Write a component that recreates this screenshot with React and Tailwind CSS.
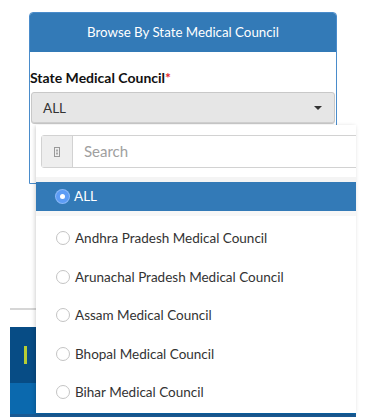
import { useState } from 'react';

const COUNCILS = [
  'ALL',
  'Andhra Pradesh Medical Council',
  'Arunachal Pradesh Medical Council',
  'Assam Medical Council',
  'Bhopal Medical Council',
  'Bihar Medical Council',
];

function Radio({ checked }) {
  if (checked) {
    return (
      <span className="flex h-[13px] w-[13px] shrink-0 items-center justify-center rounded-full bg-[#5c9cf5] shadow-[0_0_0_1px_#8ab8f8]">
        <span className="h-[5px] w-[5px] rounded-full bg-white" />
      </span>
    );
  }
  return <span className="h-[14px] w-[14px] shrink-0 rounded-full border border-[#c4c4c4] bg-white" />;
}

export default function App() {
  const [selected, setSelected] = useState('ALL');

  return (
    <div className="relative h-[419px] w-[371px] overflow-hidden bg-white font-['Lato','Open_Sans',sans-serif] text-[14px] text-[#333]">
      {/* Page underneath */}
      <div className="ml-[10px] w-[346px]">
        <div className="ml-[19px] mt-[12px] h-[172px] w-[308px] rounded-t-[4px] border border-[#4a8ccb]">
          <div className="flex h-[39px] items-center justify-center rounded-t-[3px] bg-[#337ab7] text-[13.3px] text-white">
            Browse By State Medical Council
          </div>
          <div className="pt-[16px]">
            <p className="text-[14px] font-bold leading-[20px] text-[#111]">
              State Medical Council<span className="text-[#e3262b]">*</span>
            </p>
            <div className="mx-[1px] mt-[4px] flex h-[32px] items-center justify-between rounded-[3px] border border-[#c8c8c8] bg-[#e6e6e6] pl-[11px] pr-[12px] text-[13.5px] shadow-[inset_0_-1px_0_#d0d0d0]">
              <span>{selected}</span>
              <span className="h-0 w-0 border-x-[4px] border-t-[4px] border-x-transparent border-t-[#333]" />
            </div>
          </div>
        </div>

        <div className="mt-[124px] h-[2px] bg-[#d6d6d6]" />
        <div className="mt-[17px] flex h-[56px] items-center bg-[#074c85] pl-[14px]">
          <span className="h-[18px] w-[3px] bg-[#b7cd35]" />
        </div>
        <div className="h-[31px] bg-[#0b69ae]" />
        <div className="h-[3px] bg-[#1a5a93]" />
      </div>

      {/* Open dropdown menu */}
      <div className="absolute left-[36px] top-[125px] h-[288px] w-[320px] overflow-hidden bg-white shadow-[-1px_1px_4px_rgba(0,0,0,0.18)]">
        <div className="px-[5px] pt-[10px]">
          <div className="flex h-[33px] w-[340px] rounded-[3px] border border-[#d2d2d2]">
            <div className="flex w-[31px] items-center justify-center border-r border-[#d2d2d2] bg-[#eeeeee]">
              <svg width="6" height="10" viewBox="0 0 6 10">
                <rect x="0.5" y="0.5" width="5" height="9" fill="none" stroke="#999" strokeWidth="1" />
                <rect x="2" y="2.5" width="2" height="2" fill="#aaa" />
                <rect x="2" y="5.5" width="2" height="2" fill="#aaa" />
              </svg>
            </div>
            <input
              className="flex-1 bg-white pl-[11px] text-[15px] text-[#333] outline-none placeholder:text-[#a0a0a0]"
              placeholder="Search"
            />
          </div>
        </div>
        <div className="mt-[9px] h-[5px] bg-[#f4f4f4]" />
        {COUNCILS.map((name, i) => {
          const active = name === selected;
          return (
            <div key={name}>
              <button
                onClick={() => setSelected(name)}
                className={`flex w-full items-center gap-[5px] pl-[20px] text-left ${
                  active ? 'h-[29px] bg-[#337ab7] text-white' : 'h-[38.5px] text-[#333]'
                } ${i === 1 ? 'mt-[3px]' : ''}`}
              >
                <Radio checked={active} />
                <span className="text-[13.5px]">{name}</span>
              </button>
              {active && <div className="h-[5px] bg-[#f7f7f7]" />}
            </div>
          );
        })}
      </div>
    </div>
  );
}
